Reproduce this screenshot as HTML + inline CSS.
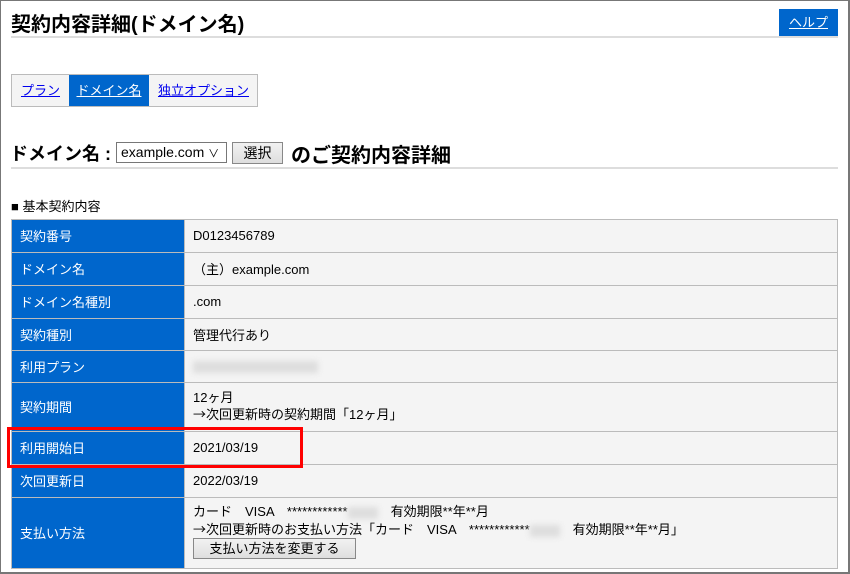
<!DOCTYPE html>
<html><head><meta charset="utf-8"><style>
*{margin:0;padding:0;box-sizing:border-box}
body{width:850px;height:574px;position:relative;background:#fff;font-family:"Liberation Sans","Noto Sans CJK JP",sans-serif;color:#000;overflow:hidden}
.frame{position:absolute;left:0;top:0;width:850px;height:574px;border:1px solid #777;border-right-width:2px;border-bottom-width:2px}
.a{position:absolute}
h1{position:absolute;left:11px;top:8px;font-size:20px;font-weight:bold;white-space:nowrap}
.ul{position:absolute;left:11px;width:827px;height:2px;background:#ddd}
.help{position:absolute;left:779px;top:9px;width:59px;height:27px;background:#0066cc;color:#fff;font-size:13px;text-decoration:underline;text-align:center;line-height:27px}
.tabs{position:absolute;left:11px;top:74px;width:247px;height:33px;border:1px solid #bbb;background:#f4f4f4;font-size:13px}
.tab{position:absolute;top:0;height:31px;line-height:31px;text-align:center;color:#00e;text-decoration:underline}
.tab.on{background:#0066cc;color:#fff}
h2{position:absolute;left:10px;top:140px;font-size:18px;font-weight:bold;white-space:nowrap}
.sel{position:absolute;left:116px;top:142px;width:111px;height:21px;border:1px solid #777;font-size:14px;line-height:19px;padding-left:4px;background:#fff}
.btn{position:absolute;border:1px solid #888;background:linear-gradient(#f2f2f2,#dedede);font-size:14px;text-align:center}
table{position:absolute;left:11px;top:219px;width:827px;border-collapse:collapse;font-size:13px}
td{border:1px solid #bbb;padding:0 0 1px 8px}
td.l{width:173px;background:#0066cc;color:#fff;border-color:#bbb}
td.v{background:#f4f4f4}
.ar{font-family:"Noto Sans CJK JP",sans-serif}
.blur{display:inline-block;background:#ddd;filter:blur(3px);height:12px;vertical-align:middle}
.red{position:absolute;left:7px;top:427px;width:296px;height:41px;border:3px solid #f00}
</style></head><body>
<div class="frame"></div>
<h1>契約内容詳細(ドメイン名)</h1>
<div class="ul" style="top:36px"></div>
<div class="help">ヘルプ</div>
<div class="tabs">
<div class="tab" style="left:0;width:57px">プラン</div>
<div class="tab on" style="left:57px;width:80px">ドメイン名</div>
<div class="tab" style="left:137px;width:109px">独立オプション</div>
</div>
<h2>ドメイン名 :</h2>
<div class="sel">example.com <span style="font-size:11px">&#x2228;</span></div>
<div class="btn" style="left:232px;top:142px;width:51px;height:22px;line-height:20px">選択</div>
<div class="a" style="left:291px;top:139px;font-size:20px;font-weight:bold;white-space:nowrap">のご契約内容詳細</div>
<div class="ul" style="top:167px"></div>
<div class="a" style="left:11px;top:196px;font-size:13px">■ 基本契約内容</div>
<table>
<tr style="height:33px"><td class="l">契約番号</td><td class="v">D0123456789</td></tr>
<tr style="height:33px"><td class="l">ドメイン名</td><td class="v">（主）example.com</td></tr>
<tr style="height:33px"><td class="l">ドメイン名種別</td><td class="v">.com</td></tr>
<tr style="height:32px"><td class="l">契約種別</td><td class="v">管理代行あり</td></tr>
<tr style="height:32px"><td class="l">利用プラン</td><td class="v"><span class="blur" style="width:125px"></span></td></tr>
<tr style="height:49px"><td class="l">契約期間</td><td class="v" style="line-height:16px">12ヶ月<br><span class="ar">→</span>次回更新時の契約期間「12ヶ月」</td></tr>
<tr style="height:33px"><td class="l">利用開始日</td><td class="v">2021/03/19</td></tr>
<tr style="height:33px"><td class="l">次回更新日</td><td class="v">2022/03/19</td></tr>
<tr style="height:71px"><td class="l">支払い方法</td><td class="v" style="line-height:17px">カード　VISA　************<span class="blur" style="width:30px"></span>　有効期限**年**月<br><span class="ar">→</span>次回更新時のお支払い方法「カード　VISA　************<span class="blur" style="width:30px"></span>　有効期限**年**月」<br><span class="btn" style="position:static;display:inline-block;width:163px;height:21px;line-height:19px;font-size:13px;margin-bottom:3px">支払い方法を変更する</span></td></tr>
</table>
<div class="red"></div>
</body></html>
